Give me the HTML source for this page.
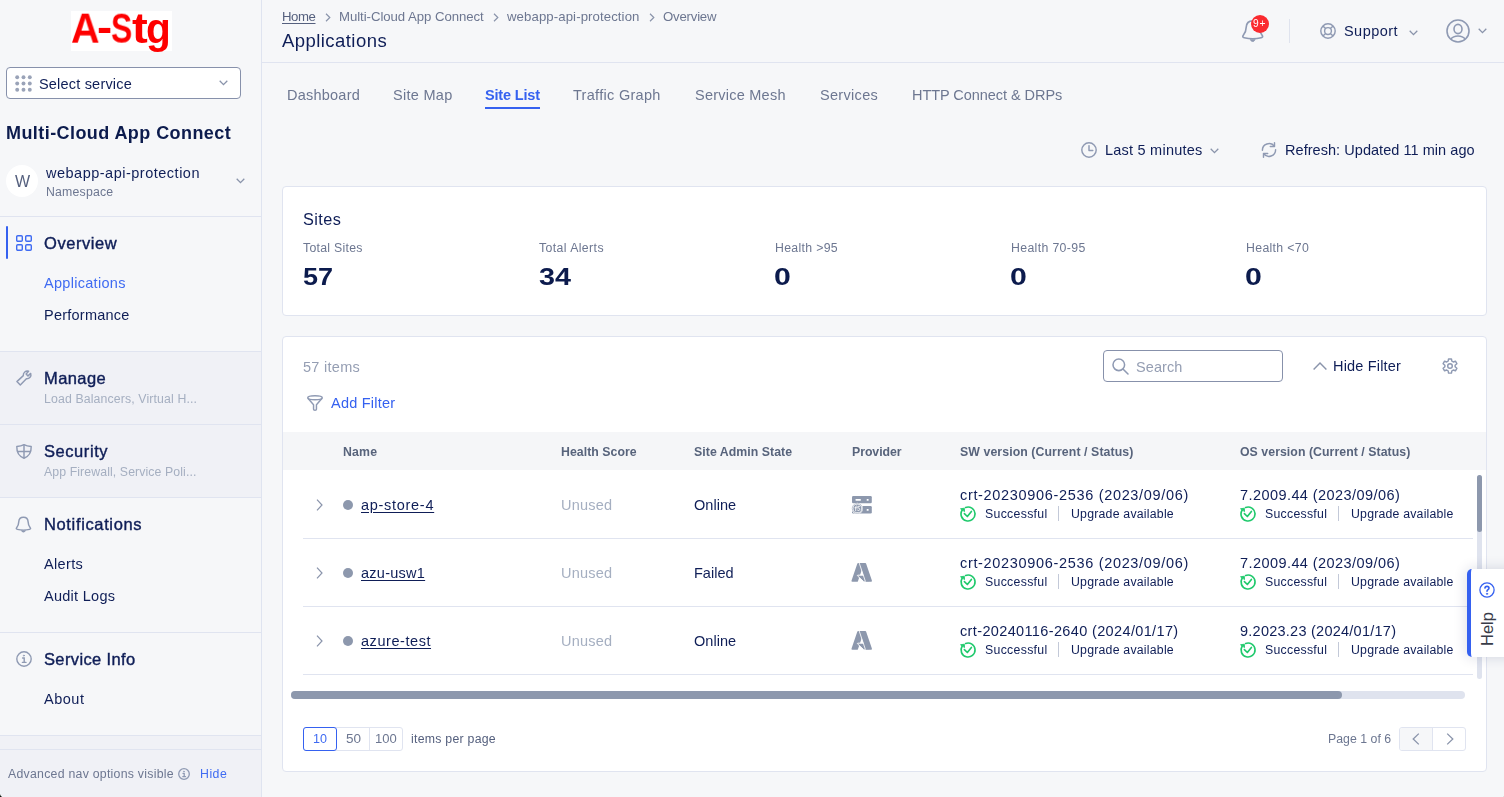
<!DOCTYPE html>
<html>
<head>
<meta charset="utf-8">
<title>Applications</title>
<style>
*{box-sizing:border-box;margin:0;padding:0}
html,body{width:1504px;height:797px;overflow:hidden;background:#f6f7f9;font-family:"Liberation Sans",sans-serif;color:#0f1e57}
.t{position:absolute;white-space:nowrap;line-height:0;color:#0f1e57;will-change:transform}
.abs{position:absolute}
.hl{position:absolute;height:1px;background:#e0e4f0}
svg{position:absolute;overflow:visible}
.lg{position:absolute;font-size:40.6px;font-weight:bold;line-height:60px;color:#fe0000;transform-origin:0 44px;white-space:nowrap;will-change:transform}
.card{position:absolute;background:#fff;border:1px solid #e0e4f0;border-radius:4px}
</style>
</head>
<body>
<!-- ================= SIDEBAR ================= -->
<div class="abs" style="left:0;top:0;width:262px;height:797px;background:#f6f7f9;border-right:1px solid #dfe4f0"></div>
<div class="abs" style="left:70.6px;top:11px;width:101.4px;height:40px;background:#fff"></div>
<div class="lg" style="left:70.8px;top:-1px;transform:scale(0.974,1.03)">A</div><div class="lg" style="left:96.66px;top:-2px;transform:scale(1.12,1.03)">-</div><div class="lg" style="left:110.9px;top:-1px;transform:scale(0.783,1.03)">S</div><div class="lg" style="left:131.8px;top:-1px;transform:scale(1.167,1.03)">t</div><div class="lg" style="left:146.4px;top:-1px;transform:scale(1.0,1.03)">g</div>

<div class="abs" style="left:6px;top:67px;width:235px;height:32px;border:1px solid #8791ab;border-radius:4px;background:#fff"></div>
<svg style="left:14.5px;top:74.5px" width="17" height="17" viewBox="0 0 17 17" fill="#9aa3b8">
  <circle cx="2.2" cy="2.2" r="1.95"/><circle cx="8.5" cy="2.2" r="1.95"/><circle cx="14.8" cy="2.2" r="1.95"/>
  <circle cx="2.2" cy="8.5" r="1.95"/><circle cx="8.5" cy="8.5" r="1.95"/><circle cx="14.8" cy="8.5" r="1.95"/>
  <circle cx="2.2" cy="14.8" r="1.95"/><circle cx="8.5" cy="14.8" r="1.95"/><circle cx="14.8" cy="14.8" r="1.95"/>
</svg>
<svg style="left:219px;top:80px" width="9" height="6" viewBox="0 0 9 6" fill="none" stroke="#8a94ab" stroke-width="1.3"><path d="M0.7 0.8 L4.5 4.6 L8.3 0.8"/></svg>

<div class="abs" style="left:6px;top:165px;width:32px;height:32px;border-radius:50%;background:#fff"></div>
<svg style="left:236px;top:177.5px" width="9" height="6" viewBox="0 0 9 6" fill="none" stroke="#8a94ab" stroke-width="1.3"><path d="M0.7 0.8 L4.5 4.6 L8.3 0.8"/></svg>
<div class="hl" style="left:0;top:216px;width:261px"></div>

<!-- Overview -->
<div class="abs" style="left:6px;top:226px;width:2px;height:33px;background:#3561f0;border-radius:1px"></div>
<svg style="left:16px;top:235.3px" width="16" height="16" viewBox="0 0 16 16" fill="none" stroke="#3f6bf2" stroke-width="1.4">
  <rect x="0.7" y="0.7" width="5.6" height="5.6" rx="1.1"/><rect x="9.7" y="0.7" width="5.6" height="5.6" rx="1.1"/>
  <rect x="0.7" y="9.7" width="5.6" height="5.6" rx="1.1"/><rect x="9.7" y="9.7" width="5.6" height="5.6" rx="1.1"/>
</svg>

<div class="abs" style="left:0;top:351px;width:261px;height:147px;background:#f0f1f6"></div>
<div class="hl" style="left:0;top:351px;width:261px"></div>
<!-- wrench -->
<svg style="left:16px;top:370px" width="16" height="16" viewBox="0 0 16 16" fill="none" stroke="#8f9ab3" stroke-width="1.45" stroke-linejoin="round" stroke-linecap="round">
  <path d="M0.9 11.6 L7.3 5.6 A4.1 4.1 0 0 1 12.6 1.2 L10.1 3.9 L12 5.9 L14.7 3.4 A4.1 4.1 0 0 1 10.4 8.8 L4.3 15.1 Z"/>
</svg>
<div class="hl" style="left:0;top:424px;width:261px"></div>
<!-- shield -->
<svg style="left:16px;top:444px" width="16" height="15" viewBox="0 0 16 15" fill="none" stroke="#8f9ab3" stroke-width="1.45" stroke-linejoin="round">
  <path d="M8 0.7 C6 1.9 3.6 2.4 0.8 2.4 C0.6 7.8 2.6 12.2 8 14.2 C13.4 12.2 15.4 7.8 15.2 2.4 C12.4 2.4 10 1.9 8 0.7 Z"/>
  <path d="M8 0.9 V14 M1 7.4 H15"/>
</svg>
<div class="hl" style="left:0;top:497px;width:261px"></div>
<!-- bell -->
<svg style="left:15.1px;top:515.5px" width="17.3" height="17.2" viewBox="0 0 24 24" preserveAspectRatio="none" fill="none" stroke="#8f9ab3" stroke-width="2" stroke-linejoin="round" stroke-linecap="round">
  <path d="M11.7 1.8 C7.6 1.8 5.4 4.6 5.2 8.2 C5.1 12 4.6 13.6 2.3 16.3 C1.2 17.6 1.9 18.4 3.2 18.7 C8 19.9 15.4 19.9 20.2 18.7 C21.5 18.4 22.2 17.6 21.1 16.3 C18.8 13.6 18.3 12 18.2 8.2 C18 4.6 15.8 1.8 11.7 1.8 Z"/>
  <path d="M9 20.6 C9.6 22.2 10.7 22.6 11.7 22.6 C12.7 22.6 13.8 22.2 14.4 20.6 Z" fill="#8f9ab3" stroke-width="0.8"/>
</svg>
<div class="hl" style="left:0;top:632px;width:261px"></div>
<!-- info -->
<svg style="left:16px;top:651.3px" width="16" height="16" viewBox="0 0 16 16" fill="none" stroke="#8f9ab3" stroke-width="1.4" stroke-linecap="round">
  <circle cx="8" cy="8" r="7.2"/><path d="M6.6 7 H8.2 V11.4 M6.4 11.4 H10"/><circle cx="7.9" cy="4.6" r="0.6" fill="#8f9ab3" stroke-width="0.6"/>
</svg>

<div class="abs" style="left:0;top:735px;width:261px;height:62px;background:#f0f1f6"></div>
<div class="hl" style="left:0;top:735px;width:261px"></div>
<div class="hl" style="left:0;top:749px;width:261px"></div>
<svg style="left:178px;top:768px" width="12" height="12" viewBox="0 0 12 12" fill="none" stroke="#8f9ab3" stroke-width="1.3" stroke-linecap="round">
  <circle cx="6" cy="6" r="5.3"/><path d="M5 5.3 H6.2 V8.6 M4.8 8.6 H7.5"/><circle cx="5.9" cy="3.4" r="0.5" fill="#8f9ab3" stroke-width="0.5"/>
</svg>
<!-- window corner artefacts -->
<svg style="left:0;top:793.5px" width="3.5" height="3.5" viewBox="0 0 6 6"><path d="M0 0 C0.4 3.2 2.8 5.6 6 6 H0 Z" fill="#0d160d"/></svg>
<svg style="left:1501.5px;top:794.5px" width="2.5" height="2.5" viewBox="0 0 6 6"><path d="M6 0 C5.6 3.2 3.2 5.6 0 6 H6 Z" fill="#8d8d8d"/></svg>

<!-- ================= HEADER ================= -->
<svg class="bcch" style="left:325px;top:12.5px" width="6" height="9" viewBox="0 0 6 9" fill="none" stroke="#8a94ab" stroke-width="1.2"><path d="M1 0.8 L4.8 4.5 L1 8.2"/></svg>
<svg class="bcch" style="left:493px;top:12.5px" width="6" height="9" viewBox="0 0 6 9" fill="none" stroke="#8a94ab" stroke-width="1.2"><path d="M1 0.8 L4.8 4.5 L1 8.2"/></svg>
<svg class="bcch" style="left:648.5px;top:12.5px" width="6" height="9" viewBox="0 0 6 9" fill="none" stroke="#8a94ab" stroke-width="1.2"><path d="M1 0.8 L4.8 4.5 L1 8.2"/></svg>
<div class="hl" style="left:262px;top:62px;width:1242px"></div>
<!-- bell -->
<svg style="left:1241px;top:18.5px" width="24" height="24" viewBox="0 0 24 24" fill="none" stroke="#8f9ab3" stroke-width="1.65" stroke-linejoin="round" stroke-linecap="round">
  <path d="M11.7 1.8 C7.6 1.8 5.4 4.6 5.2 8.2 C5.1 12 4.6 13.6 2.3 16.3 C1.2 17.6 1.9 18.4 3.2 18.7 C8 19.9 15.4 19.9 20.2 18.7 C21.5 18.4 22.2 17.6 21.1 16.3 C18.8 13.6 18.3 12 18.2 8.2 C18 4.6 15.8 1.8 11.7 1.8 Z"/>
  <path d="M9.4 20.7 C9.9 22.1 10.8 22.5 11.7 22.5 C12.6 22.5 13.5 22.1 14 20.7 Z" fill="#8f9ab3" stroke-width="0.8"/>
</svg>
<div class="abs" style="left:1251px;top:15px;width:18px;height:18px;border-radius:50%;background:#fa2a2f"></div>
<div class="abs" style="left:1289px;top:19px;width:1px;height:24px;background:#dfe3ee"></div>
<!-- support lifebuoy -->
<svg style="left:1319.7px;top:23px" width="16" height="16" viewBox="0 0 16 16" fill="none" stroke="#8f9ab3" stroke-width="1.45">
  <circle cx="8" cy="8" r="7.2"/><circle cx="8" cy="8" r="3.4"/>
  <path d="M2.9 2.9 L5.6 5.6 M13.1 2.9 L10.4 5.6 M2.9 13.1 L5.6 10.4 M13.1 13.1 L10.4 10.4"/>
</svg>
<svg style="left:1409px;top:30px" width="9" height="6" viewBox="0 0 9 6" fill="none" stroke="#8a94ab" stroke-width="1.3"><path d="M0.7 0.8 L4.5 4.6 L8.3 0.8"/></svg>
<!-- user -->
<svg style="left:1446px;top:18.5px" width="24" height="24" viewBox="0 0 24 24" fill="none" stroke="#8f9ab3" stroke-width="1.6">
  <circle cx="12" cy="12" r="11"/>
  <ellipse cx="12" cy="10" rx="4" ry="4.6"/>
  <path d="M4.8 20.2 C6.8 17.4 9.5 17 12 17 C14.5 17 17.2 17.4 19.2 20.2"/>
</svg>
<svg style="left:1478px;top:28px" width="9" height="6" viewBox="0 0 9 6" fill="none" stroke="#8a94ab" stroke-width="1.3"><path d="M0.7 0.8 L4.5 4.6 L8.3 0.8"/></svg>

<!-- tab underline -->
<div class="abs" style="left:485px;top:107px;width:55px;height:2px;background:#3561f0"></div>

<!-- time controls -->
<svg style="left:1081px;top:142px" width="16" height="16" viewBox="0 0 16 16" fill="none" stroke="#8f9ab3" stroke-width="1.45" stroke-linecap="round" stroke-linejoin="round"><circle cx="8" cy="8" r="7.2"/><path d="M8 3.6 V8.4 H11.8"/></svg>
<svg style="left:1209.5px;top:147.5px" width="9" height="6" viewBox="0 0 9 6" fill="none" stroke="#8a94ab" stroke-width="1.3"><path d="M0.7 0.8 L4.5 4.6 L8.3 0.8"/></svg>
<svg style="left:1261px;top:142px" width="16" height="16" viewBox="0 0 16 16" fill="none" stroke="#8f9ab3" stroke-width="1.45" stroke-linecap="round" stroke-linejoin="round">
  <path d="M1.4 8.3 A6.65 6.65 0 0 1 13.3 4.2"/><path d="M13.5 0.7 V4.5 H9.3"/>
  <path d="M14.6 7.7 A6.65 6.65 0 0 1 2.7 11.8"/><path d="M2.5 15.3 V11.5 H6.7"/>
</svg>

<!-- Sites card -->
<div class="card" style="left:282px;top:186px;width:1205px;height:130px"></div>

<!-- Table card -->
<div class="card" style="left:282px;top:336px;width:1205px;height:436px"></div>
<div class="abs" style="left:1103px;top:350px;width:180px;height:32px;border:1px solid #8791ab;border-radius:4px;background:#fff"></div>
<svg style="left:1111.5px;top:357.5px" width="17" height="17" viewBox="0 0 17 17" fill="none" stroke="#8f9ab3" stroke-width="1.55" stroke-linecap="round"><circle cx="6.8" cy="6.8" r="5.8"/><path d="M11.2 11.2 L16 16"/></svg>
<svg style="left:1312.5px;top:362px" width="14" height="8" viewBox="0 0 14 8" fill="none" stroke="#8a94ab" stroke-width="1.45"><path d="M0.6 7.4 L7 1 L13.4 7.4"/></svg>
<!-- gear -->
<svg id="gear" style="left:1442px;top:358px" width="16" height="16" viewBox="0 0 16 16" fill="none" stroke="#8f9ab3" stroke-width="1.45" stroke-linejoin="round">
  <path d="M6.15 3.19 L6.55 0.90 L9.45 0.90 L9.85 3.19 A5.15 5.15 0 0 1 11.24 4.00 L13.43 3.20 L14.88 5.70 L13.09 7.19 A5.15 5.15 0 0 1 13.09 8.81 L14.88 10.30 L13.43 12.80 L11.24 12.00 A5.15 5.15 0 0 1 9.85 12.81 L9.45 15.10 L6.55 15.10 L6.15 12.81 A5.15 5.15 0 0 1 4.76 12.00 L2.57 12.80 L1.12 10.30 L2.91 8.81 A5.15 5.15 0 0 1 2.91 7.19 L1.12 5.70 L2.57 3.20 L4.76 4.00 A5.15 5.15 0 0 1 6.15 3.19 Z"/>
  <circle cx="8" cy="8" r="2.3"/>
</svg>
<!-- funnel -->
<svg style="left:307px;top:395px" width="16" height="16" viewBox="0 0 16 16" fill="none" stroke="#8f9ab3" stroke-width="1.45" stroke-linejoin="round">
  <ellipse cx="8" cy="2.75" rx="7.25" ry="2.05"/>
  <path d="M0.9 3.3 L6.55 9.7 V14.2 C6.55 15.6 9.45 15.6 9.45 14.2 V9.7 L15.1 3.3"/>
</svg>
<!-- table header -->
<div class="abs" style="left:283px;top:432px;width:1203px;height:38px;background:#f5f6f8"></div>
<svg style="left:315.5px;top:498.8px" width="7" height="12" viewBox="0 0 7 12" fill="none" stroke="#8a94ab" stroke-width="1.2"><path d="M1 0.6 L6 6 L1 11.4"/></svg>
<div class="abs" style="left:343px;top:500px;width:10px;height:10px;border-radius:50%;background:#8d98ad"></div>
<svg style="left:852.1px;top:495.7px" width="19.8" height="17.6" viewBox="0 0 19.8 17.6">
<rect x="0" y="0" width="19.8" height="7.3" rx="1.2" fill="#8d98ad"/><rect x="0" y="10.1" width="19.8" height="7.4" rx="1.2" fill="#8d98ad"/>
<rect x="3.6" y="3.1" width="5.2" height="1.6" rx="0.3" fill="#fff"/><rect x="14.7" y="2.9" width="1.9" height="1.9" rx="0.3" fill="#fff"/><rect x="14.7" y="12.9" width="1.9" height="1.9" rx="0.3" fill="#fff"/>
<circle cx="5.3" cy="12.4" r="5.7" fill="#fff"/><circle cx="5.3" cy="12.4" r="5.05" fill="none" stroke="#8d98ad" stroke-width="0.55"/>
<circle cx="5.3" cy="12.4" r="3.95" fill="#8d98ad"/>
<path d="M4.9 10.1 C4.3 9.8 3.7 10.1 3.7 10.9 V14.9 M2.9 11.8 H4.7 M7.7 10.3 H6 L5.8 12.2 C6.7 11.7 7.8 12.2 7.8 13.3 C7.8 14.6 6.3 15 5.5 14.2" fill="none" stroke="#fff" stroke-width="0.85" stroke-linecap="round" stroke-linejoin="round"/></svg>
<svg style="left:960px;top:506px" width="16" height="16" viewBox="0 0 16 16" fill="none" stroke="#1fc96c" stroke-width="1.65" stroke-linecap="round" stroke-linejoin="round"><path d="M5.6 1.45 A7 7 0 1 1 2.1 4.3"/><path d="M0.9 2.7 L4.3 2.2 L4.5 5.2 Z" fill="#1fc96c" stroke-width="0.9"/><path d="M4.4 7.6 L7.35 10.5 L11.4 5.4"/></svg>
<div class="abs" style="left:1058px;top:506px;width:1px;height:15px;background:#c3c9d8"></div>
<svg style="left:1240px;top:506px" width="16" height="16" viewBox="0 0 16 16" fill="none" stroke="#1fc96c" stroke-width="1.65" stroke-linecap="round" stroke-linejoin="round"><path d="M5.6 1.45 A7 7 0 1 1 2.1 4.3"/><path d="M0.9 2.7 L4.3 2.2 L4.5 5.2 Z" fill="#1fc96c" stroke-width="0.9"/><path d="M4.4 7.6 L7.35 10.5 L11.4 5.4"/></svg>
<div class="abs" style="left:1338px;top:506px;width:1px;height:15px;background:#c3c9d8"></div>
<div class="hl" style="left:303px;top:538px;width:1170px"></div>
<svg style="left:315.5px;top:566.8px" width="7" height="12" viewBox="0 0 7 12" fill="none" stroke="#8a94ab" stroke-width="1.2"><path d="M1 0.6 L6 6 L1 11.4"/></svg>
<div class="abs" style="left:343px;top:568px;width:10px;height:10px;border-radius:50%;background:#8d98ad"></div>
<svg style="left:852.1px;top:562.9px" width="19.9" height="18.8" viewBox="4.2 6.5 87.6 83" preserveAspectRatio="none">
<path d="M33.338 6.544h26.038L32.346 86.63a4.152 4.152 0 0 1-3.933 2.824H8.149a4.145 4.145 0 0 1-3.928-5.47L29.404 9.368a4.152 4.152 0 0 1 3.934-2.825z" fill="#8d98ad" transform="translate(-2 0)"/>
<path d="M71.175 60.261H29.972a1.911 1.911 0 0 0-1.305 3.309l26.532 24.764a4.171 4.171 0 0 0 2.846 1.121h23.38z" fill="#8d98ad" stroke="#fff" stroke-width="4.2" stroke-linejoin="round"/>
<path d="M66.595 9.364a4.145 4.145 0 0 0-3.928-2.82H33.648a4.146 4.146 0 0 1 3.928 2.82l25.184 74.62a4.146 4.146 0 0 1-3.928 5.472h29.02a4.146 4.146 0 0 0 3.927-5.472z" fill="#8d98ad"/>
<path d="M35.4 5 L63.4 88.6" stroke="#fff" stroke-width="3.8" fill="none"/>
</svg>
<svg style="left:960px;top:574px" width="16" height="16" viewBox="0 0 16 16" fill="none" stroke="#1fc96c" stroke-width="1.65" stroke-linecap="round" stroke-linejoin="round"><path d="M5.6 1.45 A7 7 0 1 1 2.1 4.3"/><path d="M0.9 2.7 L4.3 2.2 L4.5 5.2 Z" fill="#1fc96c" stroke-width="0.9"/><path d="M4.4 7.6 L7.35 10.5 L11.4 5.4"/></svg>
<div class="abs" style="left:1058px;top:574px;width:1px;height:15px;background:#c3c9d8"></div>
<svg style="left:1240px;top:574px" width="16" height="16" viewBox="0 0 16 16" fill="none" stroke="#1fc96c" stroke-width="1.65" stroke-linecap="round" stroke-linejoin="round"><path d="M5.6 1.45 A7 7 0 1 1 2.1 4.3"/><path d="M0.9 2.7 L4.3 2.2 L4.5 5.2 Z" fill="#1fc96c" stroke-width="0.9"/><path d="M4.4 7.6 L7.35 10.5 L11.4 5.4"/></svg>
<div class="abs" style="left:1338px;top:574px;width:1px;height:15px;background:#c3c9d8"></div>
<div class="hl" style="left:303px;top:606px;width:1170px"></div>
<svg style="left:315.5px;top:634.8px" width="7" height="12" viewBox="0 0 7 12" fill="none" stroke="#8a94ab" stroke-width="1.2"><path d="M1 0.6 L6 6 L1 11.4"/></svg>
<div class="abs" style="left:343px;top:636px;width:10px;height:10px;border-radius:50%;background:#8d98ad"></div>
<svg style="left:852.1px;top:630.9px" width="19.9" height="18.8" viewBox="4.2 6.5 87.6 83" preserveAspectRatio="none">
<path d="M33.338 6.544h26.038L32.346 86.63a4.152 4.152 0 0 1-3.933 2.824H8.149a4.145 4.145 0 0 1-3.928-5.47L29.404 9.368a4.152 4.152 0 0 1 3.934-2.825z" fill="#8d98ad" transform="translate(-2 0)"/>
<path d="M71.175 60.261H29.972a1.911 1.911 0 0 0-1.305 3.309l26.532 24.764a4.171 4.171 0 0 0 2.846 1.121h23.38z" fill="#8d98ad" stroke="#fff" stroke-width="4.2" stroke-linejoin="round"/>
<path d="M66.595 9.364a4.145 4.145 0 0 0-3.928-2.82H33.648a4.146 4.146 0 0 1 3.928 2.82l25.184 74.62a4.146 4.146 0 0 1-3.928 5.472h29.02a4.146 4.146 0 0 0 3.927-5.472z" fill="#8d98ad"/>
<path d="M35.4 5 L63.4 88.6" stroke="#fff" stroke-width="3.8" fill="none"/>
</svg>
<svg style="left:960px;top:642px" width="16" height="16" viewBox="0 0 16 16" fill="none" stroke="#1fc96c" stroke-width="1.65" stroke-linecap="round" stroke-linejoin="round"><path d="M5.6 1.45 A7 7 0 1 1 2.1 4.3"/><path d="M0.9 2.7 L4.3 2.2 L4.5 5.2 Z" fill="#1fc96c" stroke-width="0.9"/><path d="M4.4 7.6 L7.35 10.5 L11.4 5.4"/></svg>
<div class="abs" style="left:1058px;top:642px;width:1px;height:15px;background:#c3c9d8"></div>
<svg style="left:1240px;top:642px" width="16" height="16" viewBox="0 0 16 16" fill="none" stroke="#1fc96c" stroke-width="1.65" stroke-linecap="round" stroke-linejoin="round"><path d="M5.6 1.45 A7 7 0 1 1 2.1 4.3"/><path d="M0.9 2.7 L4.3 2.2 L4.5 5.2 Z" fill="#1fc96c" stroke-width="0.9"/><path d="M4.4 7.6 L7.35 10.5 L11.4 5.4"/></svg>
<div class="abs" style="left:1338px;top:642px;width:1px;height:15px;background:#c3c9d8"></div>
<div class="hl" style="left:303px;top:674px;width:1170px"></div>
<!-- scrollbars -->
<div class="abs" style="left:291px;top:691px;width:1174px;height:8px;border-radius:4px;background:#dfe3ee"></div>
<div class="abs" style="left:291px;top:691px;width:1051px;height:8px;border-radius:4px;background:#8d98ad"></div>
<div class="abs" style="left:1477px;top:475px;width:5px;height:204px;border-radius:3px;background:#dfe3ee"></div>
<div class="abs" style="left:1477px;top:475px;width:5px;height:57px;border-radius:3px;background:#8d98ad"></div>
<!-- pagination -->
<div class="abs" style="left:303px;top:727px;width:100px;height:24px;border:1px solid #e0e4f0;border-radius:3px;background:#fff"></div>
<div class="abs" style="left:369px;top:728px;width:1px;height:22px;background:#e0e4f0"></div>
<div class="abs" style="left:303px;top:727px;width:34px;height:24px;border:1px solid #3561f0;border-radius:3px;background:#fff"></div>
<div class="abs" style="left:1399px;top:727px;width:67px;height:24px;border:1px solid #e0e4f0;border-radius:3px;background:#fff"></div>
<div class="abs" style="left:1400px;top:728px;width:33px;height:22px;border-radius:2px 0 0 2px;background:#f6f7f9;border-right:1px solid #e0e4f0"></div>
<svg style="left:1412px;top:733px" width="8" height="12" viewBox="0 0 8 12" fill="none" stroke="#8a94ab" stroke-width="1.3"><path d="M6.8 0.6 L1.2 6 L6.8 11.4"/></svg>
<svg style="left:1445.5px;top:733px" width="8" height="12" viewBox="0 0 8 12" fill="none" stroke="#8a94ab" stroke-width="1.3"><path d="M1.2 0.6 L6.8 6 L1.2 11.4"/></svg>
<!-- help tab -->
<div class="abs" style="left:1467px;top:569px;width:50px;height:88px;background:#fff;border-left:4px solid #3561f0;border-radius:5px 0 0 5px;box-shadow:0 0 14px rgba(20,30,80,0.16)"></div>
<svg style="left:1479px;top:582.4px" width="16" height="16" viewBox="0 0 16 16" fill="none" stroke="#3561f0" stroke-width="1.3" stroke-linecap="round"><circle cx="8" cy="8" r="7.1"/><path d="M6 6.1 C6 3.8 10 3.8 10 6.1 C10 7.7 8 7.6 8 9.3" stroke-width="1.6"/><circle cx="8" cy="11.8" r="0.7" fill="#3561f0" stroke-width="0.6"/></svg>
<div class="abs" id="help" style="left:1487.3px;top:628.6px;font-size:16.5px;color:#383c48;line-height:1;white-space:nowrap;transform:translate(-50%,-50%) rotate(-90deg)">Help</div>

<!-- ================= TEXT ================= -->
<div class="t" id="selsvc" style="left:39px;top:83.98px;font-size:14.5px;letter-spacing:0.193px;">Select service</div>
<div class="t" id="mcac" style="left:6px;top:132.76px;font-size:18px;letter-spacing:0.428px;font-weight:bold;color:#0c1b4d">Multi-Cloud App Connect</div>
<div class="t" id="wletter" style="left:14.6px;top:182.46px;font-size:16px;color:#55607e">W</div>
<div class="t" id="nsname" style="left:46px;top:172.98px;font-size:14.5px;letter-spacing:0.500px;">webapp-api-protection</div>
<div class="t" id="nslbl" style="left:46px;top:191.74px;font-size:12.3px;letter-spacing:0.196px;color:#6d7791">Namespace</div>
<div class="t" id="ov" style="left:44px;top:243.28px;font-size:16.5px;letter-spacing:0.556px;-webkit-text-stroke:0.4px #0f1e57;">Overview</div>
<div class="t" id="apps" style="left:44px;top:282.98px;font-size:14.5px;letter-spacing:0.290px;color:#3f6bf2">Applications</div>
<div class="t" id="perf" style="left:44px;top:314.98px;font-size:14.5px;letter-spacing:0.236px;">Performance</div>
<div class="t" id="mng" style="left:44px;top:378.28px;font-size:16.5px;letter-spacing:0.424px;-webkit-text-stroke:0.4px #0f1e57;">Manage</div>
<div class="t" id="mngs" style="left:44px;top:398.74px;font-size:12.3px;letter-spacing:0.127px;color:#a5afc1">Load Balancers, Virtual H...</div>
<div class="t" id="secu" style="left:44px;top:451.28px;font-size:16.5px;letter-spacing:0.564px;-webkit-text-stroke:0.4px #0f1e57;">Security</div>
<div class="t" id="secs" style="left:44px;top:471.74px;font-size:12.3px;letter-spacing:0.097px;color:#a5afc1">App Firewall, Service Poli...</div>
<div class="t" id="noti" style="left:44px;top:524.28px;font-size:16.5px;letter-spacing:0.640px;-webkit-text-stroke:0.4px #0f1e57;">Notifications</div>
<div class="t" id="alr" style="left:44px;top:563.98px;font-size:14.5px;letter-spacing:0.360px;">Alerts</div>
<div class="t" id="aud" style="left:44px;top:595.98px;font-size:14.5px;letter-spacing:0.272px;">Audit Logs</div>
<div class="t" id="sinfo" style="left:44px;top:659.28px;font-size:16.5px;letter-spacing:0.367px;-webkit-text-stroke:0.4px #0f1e57;">Service Info</div>
<div class="t" id="abt" style="left:44px;top:698.98px;font-size:14.5px;letter-spacing:0.518px;">About</div>
<div class="t" id="adv" style="left:8px;top:773.74px;font-size:12.3px;letter-spacing:0.259px;color:#6d7791">Advanced nav options visible</div>
<div class="t" id="hide" style="left:200px;top:773.74px;font-size:12.3px;letter-spacing:0.498px;color:#3f6bf2">Hide</div>
<div class="t" id="bc1" style="left:282px;top:17.43px;font-size:13.2px;letter-spacing:-0.420px;color:#55607e;text-decoration:underline;text-underline-offset:2px">Home</div>
<div class="t" id="bc2" style="left:339px;top:17.43px;font-size:13.2px;letter-spacing:-0.052px;color:#6d7791">Multi-Cloud App Connect</div>
<div class="t" id="bc3" style="left:507px;top:17.43px;font-size:13.2px;letter-spacing:0.096px;color:#6d7791">webapp-api-protection</div>
<div class="t" id="bc4" style="left:663px;top:17.43px;font-size:13.2px;letter-spacing:-0.206px;color:#6d7791">Overview</div>
<div class="t" id="title" style="left:282px;top:40.59px;font-size:18.5px;letter-spacing:0.443px;">Applications</div>
<div class="t" id="badge" style="left:1253.4px;top:24.47px;font-size:10.2px;color:#fff;letter-spacing:0.8px">9+</div>
<div class="t" id="supp" style="left:1344px;top:30.98px;font-size:14.5px;letter-spacing:0.447px;">Support</div>
<div class="t" id="tb1" style="left:287px;top:94.98px;font-size:14.5px;letter-spacing:0.230px;color:#6d7791">Dashboard</div>
<div class="t" id="tb2" style="left:393px;top:94.98px;font-size:14.5px;letter-spacing:0.292px;color:#6d7791">Site Map</div>
<div class="t" id="tb3" style="left:485px;top:94.98px;font-size:14.5px;letter-spacing:-0.166px;color:#3561f0;font-weight:bold">Site List</div>
<div class="t" id="tb4" style="left:573px;top:94.98px;font-size:14.5px;letter-spacing:0.297px;color:#6d7791">Traffic Graph</div>
<div class="t" id="tb5" style="left:695px;top:94.98px;font-size:14.5px;letter-spacing:0.240px;color:#6d7791">Service Mesh</div>
<div class="t" id="tb6" style="left:820px;top:94.98px;font-size:14.5px;letter-spacing:0.310px;color:#6d7791">Services</div>
<div class="t" id="tb7" style="left:912px;top:94.98px;font-size:14.5px;letter-spacing:-0.053px;color:#6d7791">HTTP Connect &amp; DRPs</div>
<div class="t" id="l5m" style="left:1105px;top:149.98px;font-size:14.5px;letter-spacing:0.228px;">Last 5 minutes</div>
<div class="t" id="rfr" style="left:1285px;top:149.98px;font-size:14.5px;letter-spacing:0.047px;">Refresh: Updated 11 min ago</div>
<div class="t" id="sites" style="left:303px;top:219.35px;font-size:16.3px;letter-spacing:0.412px;">Sites</div>
<div class="t" id="sl1" style="left:303px;top:247.74px;font-size:12.3px;letter-spacing:0.276px;color:#6d7791">Total Sites</div>
<div class="t" id="sl2" style="left:539px;top:247.74px;font-size:12.3px;letter-spacing:0.403px;color:#6d7791">Total Alerts</div>
<div class="t" id="sl3" style="left:775px;top:247.74px;font-size:12.3px;letter-spacing:0.318px;color:#6d7791">Health &gt;95</div>
<div class="t" id="sl4" style="left:1011px;top:247.74px;font-size:12.3px;letter-spacing:0.352px;color:#6d7791">Health 70-95</div>
<div class="t" id="sl5" style="left:1246px;top:247.74px;font-size:12.3px;letter-spacing:0.329px;color:#6d7791">Health &lt;70</div>
<div class="t" id="sv1" style="left:303px;top:277.41px;font-size:24.8px;font-weight:bold;color:#0c1b4d;transform:scaleX(1.09);transform-origin:0 0">57</div>
<div class="t" id="sv2" style="left:538.6px;top:277.41px;font-size:24.8px;font-weight:bold;color:#0c1b4d;transform:scaleX(1.16);transform-origin:0 0">34</div>
<div class="t" id="sv3" style="left:774.2px;top:277.41px;font-size:24.8px;font-weight:bold;color:#0c1b4d;transform:scaleX(1.22);transform-origin:0 0">0</div>
<div class="t" id="sv4" style="left:1010.2px;top:277.41px;font-size:24.8px;font-weight:bold;color:#0c1b4d;transform:scaleX(1.22);transform-origin:0 0">0</div>
<div class="t" id="sv5" style="left:1245.2px;top:277.41px;font-size:24.8px;font-weight:bold;color:#0c1b4d;transform:scaleX(1.22);transform-origin:0 0">0</div>
<div class="t" id="items" style="left:303px;top:366.98px;font-size:14.5px;letter-spacing:0.281px;color:#959eb3">57 items</div>
<div class="t" id="srch" style="left:1136px;top:366.98px;font-size:14.5px;letter-spacing:0.085px;color:#959eb3">Search</div>
<div class="t" id="hf" style="left:1333px;top:365.98px;font-size:14.5px;letter-spacing:0.180px;">Hide Filter</div>
<div class="t" id="af" style="left:331px;top:402.98px;font-size:14.5px;letter-spacing:0.235px;color:#3561f0">Add Filter</div>
<div class="t" id="th1" style="left:343px;top:451.74px;font-size:12.3px;letter-spacing:0.164px;font-weight:bold;color:#58647c">Name</div>
<div class="t" id="th2" style="left:561px;top:451.74px;font-size:12.3px;letter-spacing:0.046px;font-weight:bold;color:#58647c">Health Score</div>
<div class="t" id="th3" style="left:694px;top:451.74px;font-size:12.3px;letter-spacing:0.055px;font-weight:bold;color:#58647c">Site Admin State</div>
<div class="t" id="th4" style="left:852px;top:451.74px;font-size:12.3px;letter-spacing:-0.043px;font-weight:bold;color:#58647c">Provider</div>
<div class="t" id="th5" style="left:960px;top:451.74px;font-size:12.3px;letter-spacing:0.089px;font-weight:bold;color:#58647c">SW version (Current / Status)</div>
<div class="t" id="th6" style="left:1240px;top:451.74px;font-size:12.3px;letter-spacing:0.054px;font-weight:bold;color:#58647c">OS version (Current / Status)</div>
<div class="t" id="p10" style="left:312.6px;top:738.74px;font-size:12.3px;color:#3f6bf2;transform:scaleX(1.02);transform-origin:0 0">10</div>
<div class="t" id="p50" style="left:345.6px;top:738.74px;font-size:12.3px;color:#6d7791;transform:scaleX(1.1);transform-origin:0 0">50</div>
<div class="t" id="p100" style="left:374.8px;top:738.74px;font-size:12.3px;color:#6d7791;transform:scaleX(1.06);transform-origin:0 0">100</div>
<div class="t" id="ipp" style="left:411px;top:738.74px;font-size:12.3px;letter-spacing:0.258px;color:#55607e">items per page</div>
<div class="t" id="pof" style="left:1328px;top:738.74px;font-size:12.3px;letter-spacing:0.029px;color:#6d7791">Page 1 of 6</div>
<div class="t" id="rn1" style="left:361px;top:504.98px;font-size:14.5px;letter-spacing:0.710px;text-decoration:underline;text-underline-offset:2px">ap-store-4</div>
<div class="t" id="ru1" style="left:561px;top:504.98px;font-size:14.5px;letter-spacing:0.199px;color:#a5afc1">Unused</div>
<div class="t" id="rs1" style="left:694px;top:504.98px;font-size:14.5px;letter-spacing:0.032px;">Online</div>
<div class="t" id="rw1" style="left:960px;top:494.98px;font-size:14.5px;letter-spacing:0.672px;">crt-20230906-2536 (2023/09/06)</div>
<div class="t" id="rx1" style="left:985px;top:513.74px;font-size:12.3px;letter-spacing:0.303px;">Successful</div>
<div class="t" id="ry1" style="left:1070.5px;top:513.74px;font-size:12.3px;letter-spacing:0.222px;">Upgrade available</div>
<div class="t" id="ro1" style="left:1240px;top:494.98px;font-size:14.5px;letter-spacing:0.429px;">7.2009.44 (2023/09/06)</div>
<div class="t" id="rz1" style="left:1265px;top:513.74px;font-size:12.3px;letter-spacing:0.269px;">Successful</div>
<div class="t" id="rq1" style="left:1350.5px;top:513.74px;font-size:12.3px;letter-spacing:0.203px;">Upgrade available</div>
<div class="t" id="rn2" style="left:361px;top:572.98px;font-size:14.5px;letter-spacing:0.260px;text-decoration:underline;text-underline-offset:2px">azu-usw1</div>
<div class="t" id="ru2" style="left:561px;top:572.98px;font-size:14.5px;letter-spacing:0.199px;color:#a5afc1">Unused</div>
<div class="t" id="rs2" style="left:694px;top:572.98px;font-size:14.5px;letter-spacing:0.016px;">Failed</div>
<div class="t" id="rw2" style="left:960px;top:562.98px;font-size:14.5px;letter-spacing:0.672px;">crt-20230906-2536 (2023/09/06)</div>
<div class="t" id="rx2" style="left:985px;top:581.74px;font-size:12.3px;letter-spacing:0.303px;">Successful</div>
<div class="t" id="ry2" style="left:1070.5px;top:581.74px;font-size:12.3px;letter-spacing:0.222px;">Upgrade available</div>
<div class="t" id="ro2" style="left:1240px;top:562.98px;font-size:14.5px;letter-spacing:0.429px;">7.2009.44 (2023/09/06)</div>
<div class="t" id="rz2" style="left:1265px;top:581.74px;font-size:12.3px;letter-spacing:0.269px;">Successful</div>
<div class="t" id="rq2" style="left:1350.5px;top:581.74px;font-size:12.3px;letter-spacing:0.203px;">Upgrade available</div>
<div class="t" id="rn3" style="left:361px;top:640.98px;font-size:14.5px;letter-spacing:0.555px;text-decoration:underline;text-underline-offset:2px">azure-test</div>
<div class="t" id="ru3" style="left:561px;top:640.98px;font-size:14.5px;letter-spacing:0.199px;color:#a5afc1">Unused</div>
<div class="t" id="rs3" style="left:694px;top:640.98px;font-size:14.5px;letter-spacing:0.032px;">Online</div>
<div class="t" id="rw3" style="left:960px;top:630.98px;font-size:14.5px;letter-spacing:0.361px;">crt-20240116-2640 (2024/01/17)</div>
<div class="t" id="rx3" style="left:985px;top:649.74px;font-size:12.3px;letter-spacing:0.303px;">Successful</div>
<div class="t" id="ry3" style="left:1070.5px;top:649.74px;font-size:12.3px;letter-spacing:0.222px;">Upgrade available</div>
<div class="t" id="ro3" style="left:1240px;top:630.98px;font-size:14.5px;letter-spacing:0.248px;">9.2023.23 (2024/01/17)</div>
<div class="t" id="rz3" style="left:1265px;top:649.74px;font-size:12.3px;letter-spacing:0.269px;">Successful</div>
<div class="t" id="rq3" style="left:1350.5px;top:649.74px;font-size:12.3px;letter-spacing:0.203px;">Upgrade available</div>
</body>
</html>
